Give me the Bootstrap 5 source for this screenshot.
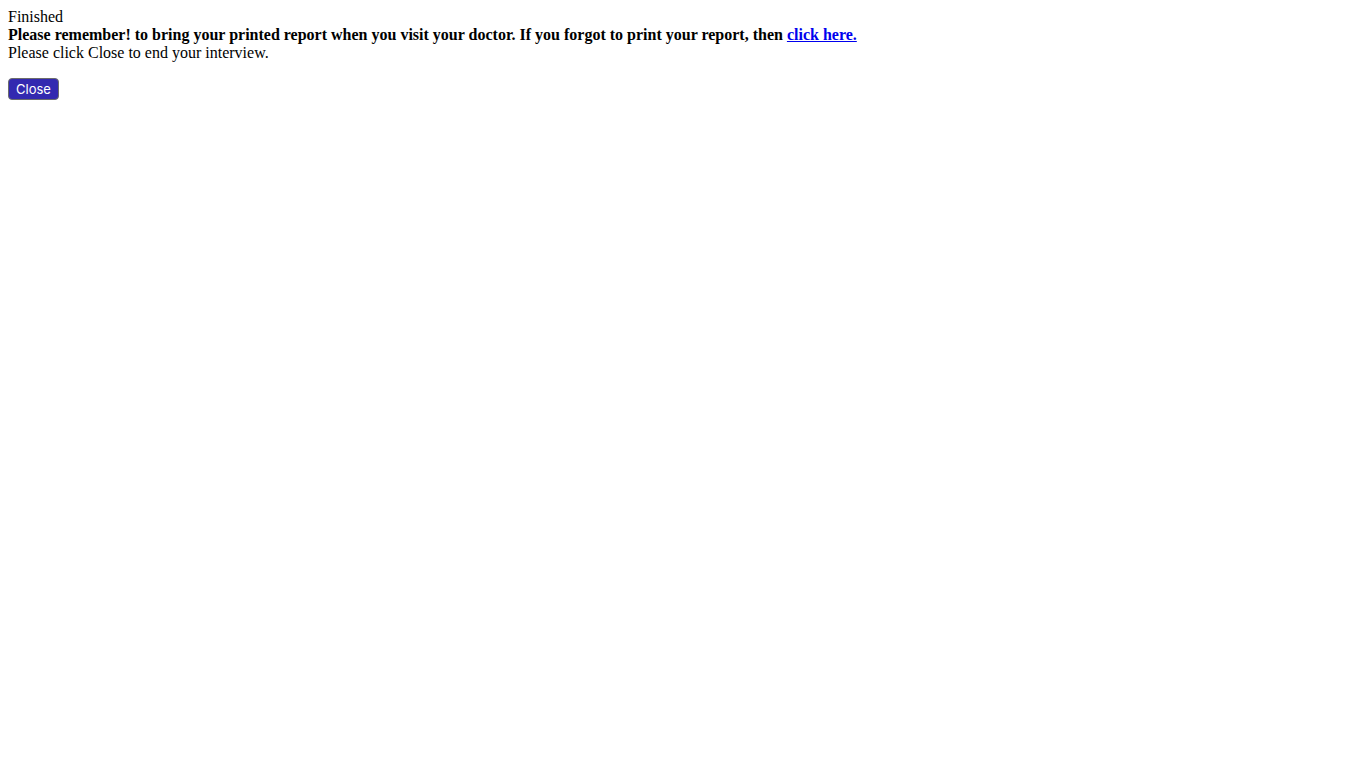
<!DOCTYPE html>
<html lang="en">
<head>
  <meta charset="UTF-8">
  <meta name="viewport" content="width=device-width, initial-scale=1">
  <title>Finished</title>
  <link href="https://cdn.jsdelivr.net/npm/bootstrap@5.3.0/dist/css/bootstrap.min.css" rel="stylesheet">
  <style>
    body {
      font-family: "Liberation Serif", "Times New Roman", serif;
      font-size: 16px;
      line-height: 18px;
      color: #000;
    }
    .report-link, .report-link:hover { color: #0000ee; }
    .btn-close-interview {
      --bs-btn-padding-x: 7px;
      --bs-btn-padding-y: 2px;
      --bs-btn-font-size: 13px;
      --bs-btn-line-height: 16px;
      --bs-btn-border-radius: 4px;
      --bs-btn-color: #fff;
      --bs-btn-bg: #3329b0;
      --bs-btn-border-color: #6c6c6c;
      --bs-btn-hover-color: #fff;
      --bs-btn-hover-bg: #281f94;
      --bs-btn-hover-border-color: #6c6c6c;
      font-family: Inter, "Liberation Sans", sans-serif;
    }
  </style>
</head>
<body class="p-2">
  <main>
    <div>Finished</div>
    <div class="fw-bold">Please remember! to bring your printed report when you visit your doctor. If you forgot to print your report, then <a href="#" class="report-link">click here.</a></div>
    <p class="mb-3">Please click Close to end your interview.</p>
    <button type="button" class="btn btn-close-interview d-block" onclick="window.close()">Close</button>
  </main>

  <script src="https://cdn.jsdelivr.net/npm/bootstrap@5.3.0/dist/js/bootstrap.bundle.min.js"></script>
</body>
</html>
